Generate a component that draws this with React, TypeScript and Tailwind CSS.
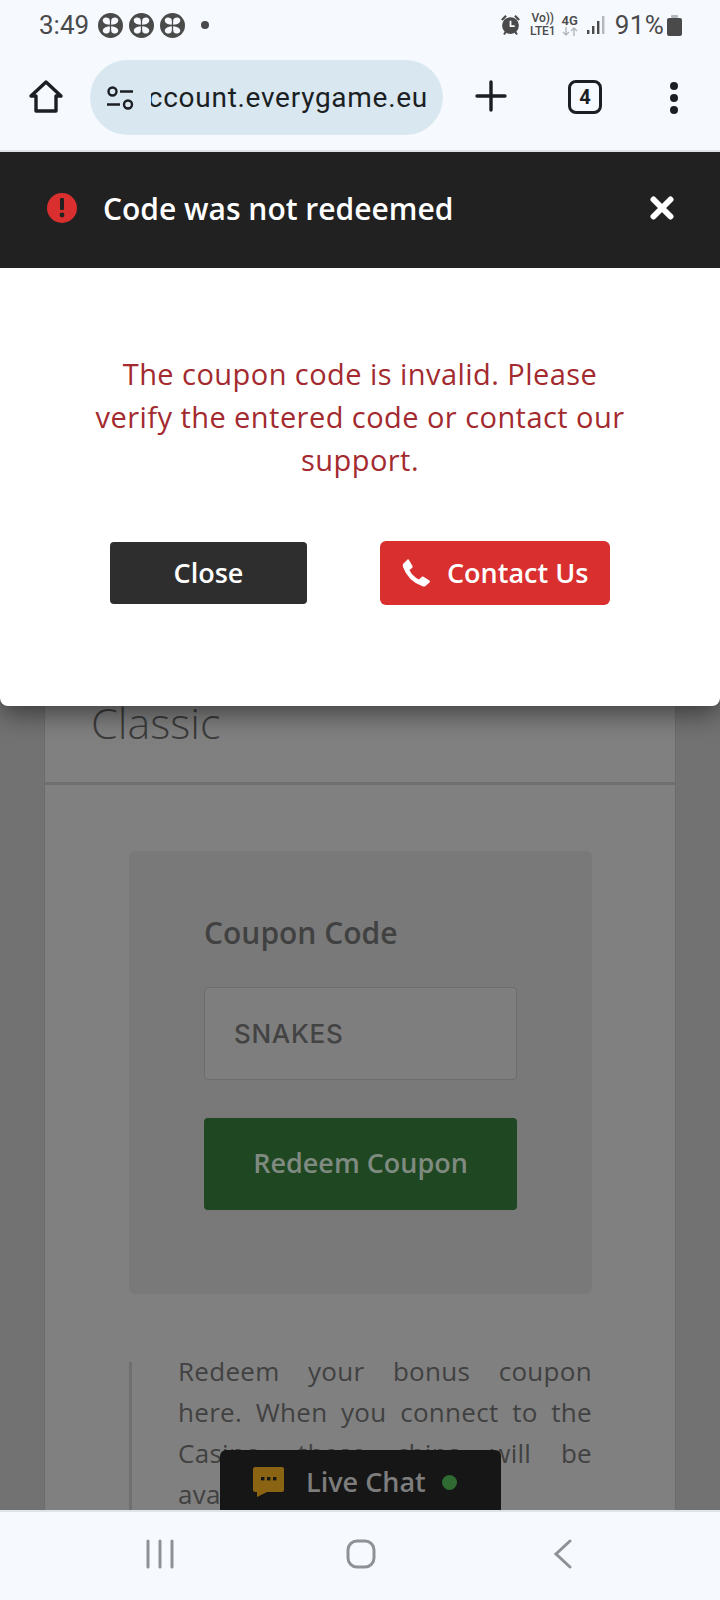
const Clover = () => (
  <svg width="25" height="25" viewBox="0 0 25 25">
    <circle cx="12.5" cy="12.5" r="12.5" fill="#4a4a4a" />
    <g fill="#f6f9fe">
      <path d="M11.8 11.8 C6.5 11.4 4 9 5 6.2 C6 3.8 10.8 3.8 11.6 6.6 C12 8.2 12 10 11.8 11.8Z" />
      <path d="M13.2 11.8 C18.5 11.4 21 9 20 6.2 C19 3.8 14.2 3.8 13.4 6.6 C13 8.2 13 10 13.2 11.8Z" />
      <path d="M11.8 13.2 C6.5 13.6 4 16 5 18.8 C6 21.2 10.8 21.2 11.6 18.4 C12 16.8 12 15 11.8 13.2Z" />
      <path d="M13.2 13.2 C18.5 13.6 21 16 20 18.8 C19 21.2 14.2 21.2 13.4 18.4 C13 16.8 13 15 13.2 13.2Z" />
    </g>
  </svg>
);

function StatusBar() {
  return (
    <div className="h-[50px] flex items-center justify-between pl-[39px] pr-[38px] font-['Roboto',sans-serif] text-[#4a4a4a]">
      <div className="flex items-center">
        <span className="text-[26px] w-[59px]">3:49</span>
        <div className="flex gap-[6px]">
          <Clover />
          <Clover />
          <Clover />
        </div>
        <span className="ml-[16px] w-[8px] h-[8px] rounded-full bg-[#4a4a4a]" />
      </div>
      <div className="flex items-center">
        <svg width="21" height="22" viewBox="0 0 20 21" fill="#4a4a4a">
          <circle cx="10" cy="11" r="8" />
          <path d="M1 5 L5 1 L6.5 2.5 L2.5 6.5Z M19 5 L15 1 L13.5 2.5 L17.5 6.5Z M3 19 L5 16 L6.5 17.5 L4.5 20Z M17 19 L15 16 L13.5 17.5 L15.5 20Z" />
          <path d="M10 6.5 V11.5 H14" fill="none" stroke="#f6f9fe" strokeWidth="1.7" />
        </svg>
        <div className="ml-[9px] flex flex-col items-center text-[12px] leading-[13px] font-medium tracking-[-0.1px]">
          <span>Vo))</span>
          <span>LTE1</span>
        </div>
        <div className="ml-[6px] flex flex-col items-center">
          <span className="text-[13px] leading-[13px] font-semibold">4G</span>
          <svg width="16" height="9" viewBox="0 0 16 9" fill="none" stroke="#b4b8bc" strokeWidth="1.4">
            <path d="M4 0 V8 M1 5 L4 8 L7 5 M12 9 V1 M9 4 L12 1 L15 4" />
          </svg>
        </div>
        <svg className="ml-[9px]" width="18" height="19" viewBox="0 0 18 19">
          <rect x="0" y="14" width="2.4" height="4" fill="#4a4a4a" />
          <rect x="5" y="10" width="2.4" height="8" fill="#4a4a4a" />
          <rect x="10" y="5" width="2.4" height="13" fill="#4a4a4a" />
          <rect x="15" y="0" width="2.4" height="18" fill="#b4b8bc" />
        </svg>
        <span className="ml-[10px] text-[26px] tracking-[0.3px]">91%</span>
        <svg className="ml-[3px]" width="15" height="21" viewBox="0 0 15 21">
          <rect x="4" y="0" width="7" height="3" rx="1" fill="#b4b8bc" />
          <rect x="0" y="3" width="15" height="18" rx="2" fill="#4a4a4a" />
        </svg>
      </div>
    </div>
  );
}

function Toolbar() {
  return (
    <div className="h-[102px] border-b-2 border-[#dfe3e8] flex items-start font-['Roboto',sans-serif] text-[#1b1f23] relative">
      <svg className="ml-[28px] mt-[29px]" width="36" height="36" viewBox="0 0 36 36" fill="none" stroke="#1b1f23" strokeWidth="3.4" strokeLinejoin="round">
        <path d="M3 17 L18 3 L33 17 H28 V32 H8 V17Z" />
      </svg>
      <div className="ml-[26px] mt-[10px] w-[353px] h-[75px] rounded-full bg-[#d9e7f0] flex items-center pl-[15px] overflow-hidden">
        <svg width="30" height="30" viewBox="0 0 30 30" fill="none" stroke="#1b1f23" strokeWidth="2.4" className="shrink-0">
          <circle cx="7.5" cy="8.5" r="4" />
          <path d="M15 8.5 H28 M2 21.5 H15" />
          <circle cx="23" cy="21.5" r="4" />
        </svg>
        <div className="ml-[16px] w-[277px] shrink-0 overflow-hidden flex justify-end whitespace-nowrap">
          <span className="text-[28px] tracking-[0.72px]">account.everygame.eu</span>
        </div>
      </div>
      <svg className="ml-[32px] mt-[30px]" width="32" height="32" viewBox="0 0 32 32" stroke="#1b1f23" strokeWidth="3.4" strokeLinecap="round">
        <path d="M16 2 V30 M2 16 H30" />
      </svg>
      <div className="ml-[61px] mt-[30px] w-[34px] h-[34px] border-[3px] border-[#1b1f23] rounded-[8px] flex items-center justify-center text-[20px] font-bold">
        4
      </div>
      <div className="ml-[68px] mt-[32px] flex flex-col gap-[4px]">
        <span className="w-[8px] h-[8px] rounded-full bg-[#1b1f23]" />
        <span className="w-[8px] h-[8px] rounded-full bg-[#1b1f23]" />
        <span className="w-[8px] h-[8px] rounded-full bg-[#1b1f23]" />
      </div>
    </div>
  );
}

function PageBehind() {
  return (
    <div className="h-full bg-[#727272] px-[44px] pt-[553px] font-['Open_Sans',sans-serif]">
      <div className="h-full bg-[#808080] border-x border-[#6c6c6c]">
        <div className="h-[80px] pl-[46px] text-[43px] leading-[36px] font-light text-[#3c3c3c] border-b-[3px] border-[#6f6f6f]">
          Classic
        </div>
        <div className="ml-[84px] mt-[66px] w-[463px] h-[443px] bg-[#797979] rounded-[6px] pl-[75px] pr-[75px] pt-[63px]">
          <div className="text-[30px] leading-[38px] font-semibold text-[#414141]">Coupon Code</div>
          <div className="mt-[35px] h-[93px] border border-[#6c6c6c] bg-[#7e7e7e] rounded-[4px] flex items-center pl-[29px] text-[26px] font-medium tracking-[0.7px] text-[#434343] font-['Inter',sans-serif]">
            SNAKES
          </div>
          <div className="mt-[38px] h-[92px] bg-[#1f4722] rounded-[4px] flex items-center justify-center pb-[2px] text-[27px] font-semibold text-[#7f8a80]">
            Redeem Coupon
          </div>
        </div>
        <div className="flex ml-[84px] mt-[68px] w-[463px] h-[200px] border-l-[3px] border-[#6f6f6f] pl-[46px]">
          <p className="-mt-[11px] text-[26px] leading-[41px] tracking-[0.3px] text-[#414141] text-justify">
            Redeem your bonus coupon here. When you connect to the Casino, these chips will be available
          </p>
        </div>
      </div>
    </div>
  );
}

function LiveChat() {
  return (
    <div className="absolute left-[220px] bottom-0 w-[281px] h-[60px] bg-[#161616] rounded-t-[6px] flex items-center pl-[33px] pt-[4px] font-['Open_Sans',sans-serif]">
      <svg width="31" height="31" viewBox="0 0 31 31">
        <path d="M2 0 H29 Q31 0 31 2 V23 Q31 25 29 25 H14 L4 30 V25 H2 Q0 25 0 23 V2 Q0 0 2 0Z" fill="#8a6412" />
        <rect x="8" y="10" width="3.4" height="3.4" fill="#161616" />
        <rect x="14" y="10" width="3.4" height="3.4" fill="#161616" />
        <rect x="20" y="10" width="3.4" height="3.4" fill="#161616" />
      </svg>
      <span className="ml-[22px] text-[27px] font-semibold text-[#7d7d7d]">Live Chat</span>
      <span className="ml-[16px] w-[15px] h-[15px] rounded-full bg-[#2f6b32]" />
    </div>
  );
}

function Dialog() {
  return (
    <div className="absolute inset-x-0 top-0 h-[554px] bg-white rounded-b-[8px] shadow-[0_6px_28px_rgba(0,0,0,0.55)] font-['Open_Sans',sans-serif]">
      <div className="h-[116px] bg-[#212121] flex items-center pl-[47px] pr-[46px] pb-[4px]">
        <span className="w-[30px] h-[30px] rounded-full bg-[#d92f2f] flex items-center justify-center">
          <svg width="6" height="20" viewBox="0 0 6 20" fill="#212121">
            <rect x="1" y="0" width="4" height="12" rx="1" />
            <circle cx="3" cy="17" r="2.4" />
          </svg>
        </span>
        <span className="ml-[26px] text-[30px] font-semibold text-white">Code was not redeemed</span>
        <svg className="ml-auto" width="24" height="24" viewBox="0 0 24 24" stroke="#ffffff" strokeWidth="6" strokeLinecap="round">
          <path d="M3.5 3.5 L20.5 20.5 M20.5 3.5 L3.5 20.5" />
        </svg>
      </div>
      <p className="mx-auto mt-[84px] w-[540px] text-center text-[29px] leading-[43px] tracking-[0.45px] text-[#a32a2f]">
        The coupon code is invalid. Please verify the entered code or contact our support.
      </p>
      <div className="mt-[60px] flex items-center pl-[110px]">
        <button className="w-[197px] h-[62px] bg-[#2e2e2e] rounded-[4px] text-[27px] font-semibold text-white">
          Close
        </button>
        <button className="ml-[73px] w-[230px] h-[64px] bg-[#d92f2f] rounded-[6px] flex items-center pl-[22px] text-[27px] font-semibold text-white">
          <svg width="29" height="28" viewBox="0 0 29 28" fill="#ffffff">
            <path d="M1 5 L5.5 0.5 Q6.5 0 7 1 L10.5 7 Q11 8 10 9 L7.5 11 Q10 17 17 20.5 L19.5 18 Q20.5 17 21.5 17.8 L27.5 21.5 Q28.5 22.5 27.5 23.5 L23.5 27 Q22 28 20 27 Q6 22 1 8 Q0.5 6 1 5Z" />
          </svg>
          <span className="ml-[16px]">Contact Us</span>
        </button>
      </div>
    </div>
  );
}

function NavBar() {
  return (
    <div className="h-[90px] border-t-2 border-[#dfe3e8] flex items-start relative">
      <svg className="ml-[146px] mt-[27px]" width="28" height="30" viewBox="0 0 28 30" stroke="#8e9296" strokeWidth="3" strokeLinecap="round">
        <path d="M2 2 V28 M14 2 V28 M26 2 V28" />
      </svg>
      <svg className="ml-[172px] mt-[27px]" width="30" height="30" viewBox="0 0 30 30" fill="none" stroke="#8e9296" strokeWidth="3">
        <rect x="2" y="2" width="26" height="26" rx="9" />
      </svg>
      <svg className="ml-[177px] mt-[27px]" width="20" height="30" viewBox="0 0 20 30" fill="none" stroke="#8e9296" strokeWidth="3" strokeLinecap="round">
        <path d="M17 2 L3 15 L17 28" />
      </svg>
    </div>
  );
}

export default function App() {
  return (
    <div className="w-[720px] h-[1600px] flex flex-col bg-[#f6f9fe] overflow-hidden">
      <StatusBar />
      <Toolbar />
      <div className="relative flex-1 min-h-0 overflow-hidden">
        <PageBehind />
        <Dialog />
        <LiveChat />
      </div>
      <NavBar />
    </div>
  );
}
